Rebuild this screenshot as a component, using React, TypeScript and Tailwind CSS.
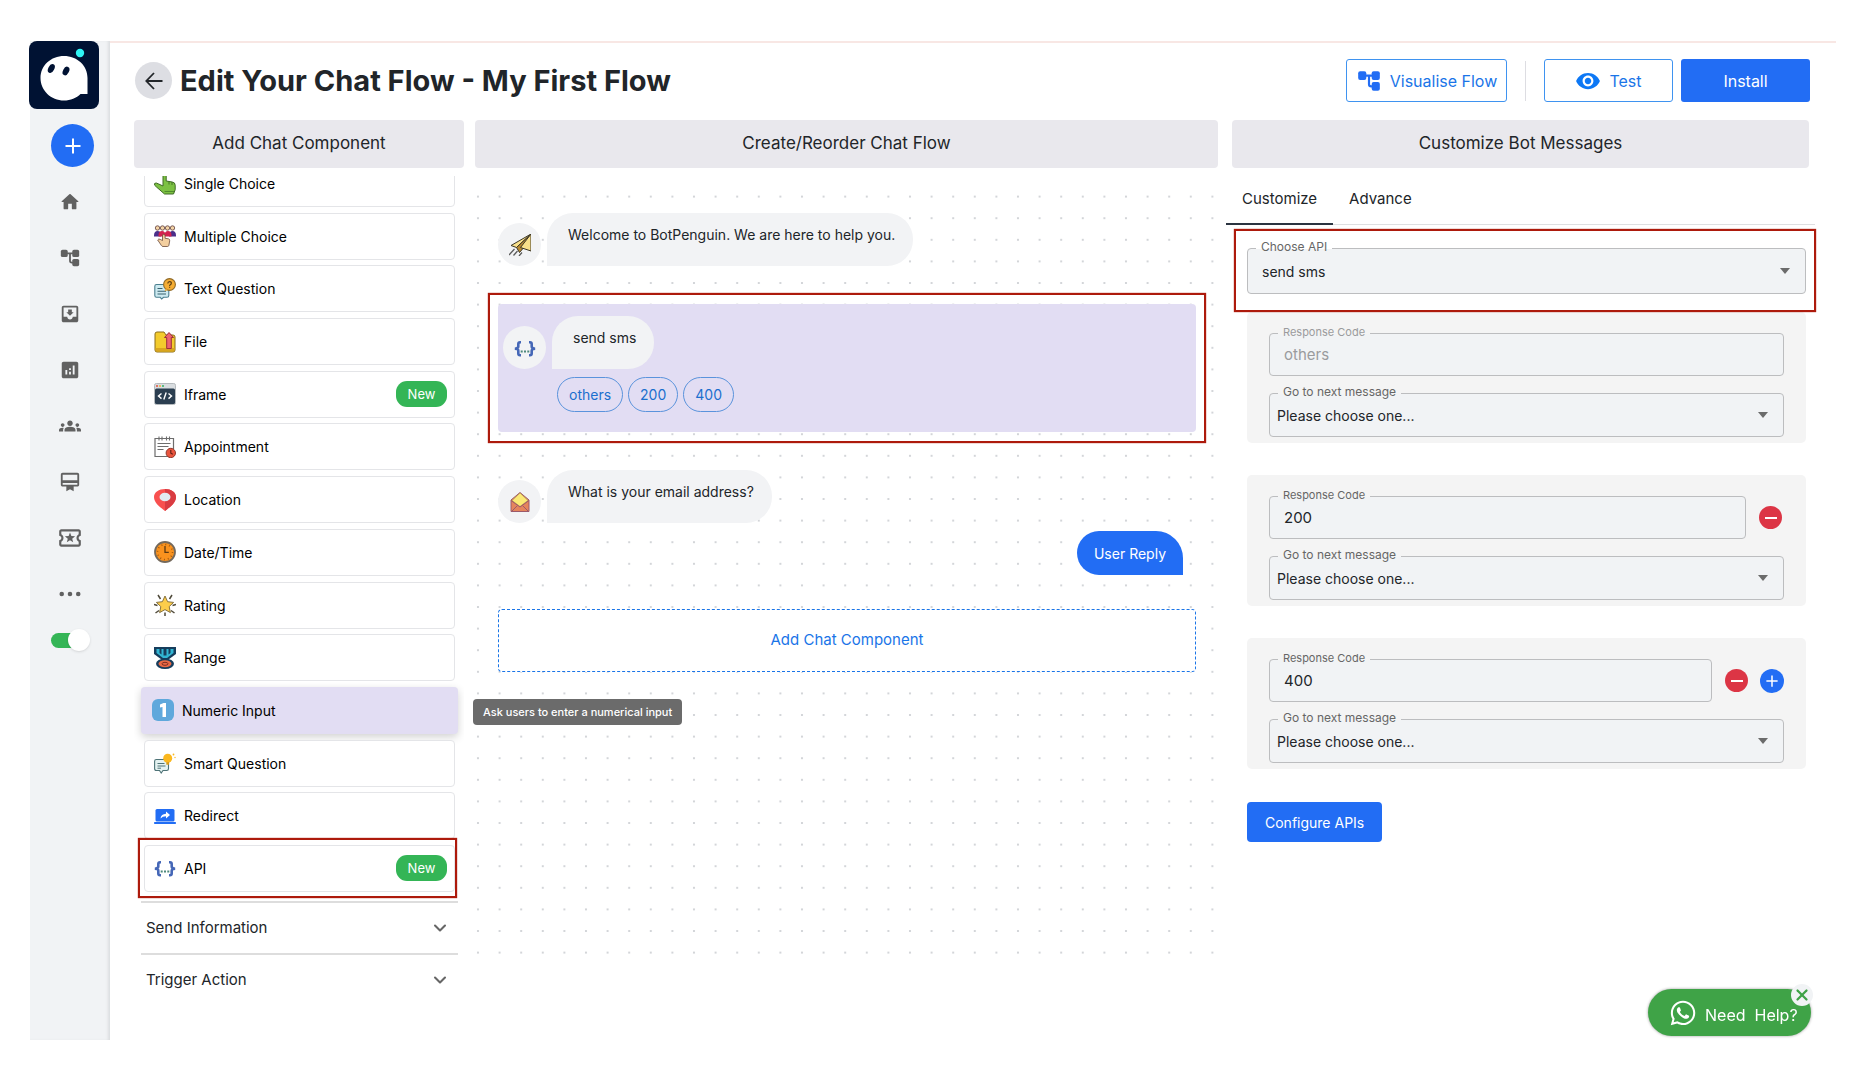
import { useState } from "react";
import type { ReactNode } from "react";
import clsx from "clsx";
import {
  MdAnalytics,
  MdCardMembership,
  MdGroups,
  MdMoveToInbox,
  MdOutlineLocalActivity,
  MdVisibility,
} from "react-icons/md";
import { FaWhatsapp } from "react-icons/fa";
import { ChevronDown, X } from "lucide-react";

type IconProps = { className?: string };

function HomeIcon({ className }: IconProps) {
  return (
    <svg viewBox="0 0 24 24" className={className} fill="currentColor" aria-hidden>
      <path d="M10 19v-5h4v5c0 .55.45 1 1 1h3c.55 0 1-.45 1-1v-7h1.7c.46 0 .68-.57.33-.87L12.67 3.6c-.38-.34-.96-.34-1.34 0l-8.36 7.53c-.34.3-.13.87.33.87H5v7c0 .55.45 1 1 1h3c.55 0 1-.45 1-1z" />
    </svg>
  );
}

function TreeIcon({ className }: IconProps) {
  return (
    <svg viewBox="0 0 24 24" className={className} aria-hidden>
      <g fill="currentColor">
        <rect x="2" y="3" width="7.5" height="8" rx="1.8" />
        <rect x="14.5" y="3" width="7.5" height="8" rx="1.8" />
        <rect x="14.5" y="13" width="7.5" height="8" rx="1.8" />
      </g>
      <path d="M8 7h8M12 7v8q0 2 2 2h2" fill="none" stroke="currentColor" strokeWidth="2" />
    </svg>
  );
}

function DotsIcon({ className }: IconProps) {
  return (
    <svg viewBox="0 0 24 24" className={className} fill="currentColor" aria-hidden>
      <circle cx="3" cy="12" r="2.5" />
      <circle cx="12" cy="12" r="2.5" />
      <circle cx="21" cy="12" r="2.5" />
    </svg>
  );
}

function PlusIcon({ className }: IconProps) {
  return (
    <svg viewBox="0 0 16 16" className={className} aria-hidden>
      <path d="M8 0.5v15M0.5 8h15" stroke="currentColor" strokeWidth="2" />
    </svg>
  );
}

function Logo() {
  return (
    <svg viewBox="0 0 70 68" className="-ml-px h-[68px] w-[70px]" aria-label="BotPenguin" role="img">
      <rect width="70" height="68" rx="8" fill="#001233" />
      <path
        d="M35 15c13 0 23.500 9.500 23.500 22v16H51.500c-4 4-10 6.500-16.500 6.500C22 59.500 11.500 49.500 11.500 37S22 15 35 15z"
        fill="#fff"
      />
      <circle cx="51" cy="12" r="4.200" fill="#2ff5f5" />
      <ellipse cx="22.300" cy="27.500" rx="3" ry="4.800" transform="rotate(27 22.300 27.500)" fill="#001233" />
      <ellipse cx="37" cy="30" rx="3" ry="4.600" transform="rotate(27 37 30)" fill="#001233" />
    </svg>
  );
}

function Glyph({ children }: { children: ReactNode }) {
  return (
    <svg viewBox="0 0 22 22" className="h-[22px] w-[22px] shrink-0" aria-hidden>
      {children}
    </svg>
  );
}

const glyphs: Record<string, ReactNode> = {
  single: (
    <Glyph>
      <path d="M4 1.500h13" stroke="#8a5a22" strokeWidth="2.500" />
      <path
        d="M9 2q1.700-1.600 3.200 0v6l6 1q3 .4 3 3.200v4.500L19.500 21h-9L2.500 14q-3-2-1.800-3.600 1.300-1 3.500.4L9 13z"
        fill="#7cc142"
        stroke="#3f6b26"
        strokeWidth="1"
      />
      <path d="M15 8.500v3M18 9v3" stroke="#3f6b26" strokeWidth=".9" />
      <path d="M10.500 18.500h9.500" stroke="#4f8a2d" strokeWidth="1" />
    </Glyph>
  ),
  multiple: (
    <Glyph>
      <path d="M0 10.500q0-4.500 3.500-4.500T7 9v2.500H0z" fill="#4a2f8a" />
      <path d="M15 10.500q0-4.500 3.500-4.500T22 10.500v1h-7z" fill="#4a2f8a" />
      <path d="M4.500 10.500Q4.500 6 8 6T11.500 10.500v1h-7zM10.500 10.500Q10.500 6 14 6t3.500 4.500v1h-7z" fill="#d3224f" />
      <g fill="#f3d3a4" stroke="#5f3f3f" strokeWidth=".8">
        <circle cx="3.500" cy="3" r="2.200" />
        <circle cx="8.500" cy="3" r="2.200" />
        <circle cx="13.500" cy="3" r="2.200" />
        <circle cx="18.500" cy="3" r="2.200" />
      </g>
      <path
        d="M8.500 11q0-1.800 1.300-1.800T11.100 11v2.300l3.300.5q1.500.3 1.300 2l-.8 4.500q-.3 1.200-1.500 1.200H9q-1 0-1.600-1L3.700 15q.9-1.700 2.500-.6l2.300 1.100z"
        fill="#f3cf9f"
        stroke="#6b4a3a"
        strokeWidth=".8"
      />
    </Glyph>
  ),
  text: (
    <Glyph>
      <path
        d="M2.500 6.500h10.500q1.800 0 1.800 1.800v9.200q0 1.800-1.800 1.800H9.500L7.700 21l-1.500-1.700H2.500Q.8 19.300.8 17.500V8.300q0-1.800 1.700-1.800z"
        fill="#cdeaf0"
        stroke="#4b7f8f"
        strokeWidth="1.100"
      />
      <path d="M3.500 10.500h5M3.500 13.300h8.500M3.500 16h8.500" stroke="#37606e" strokeWidth="1.100" />
      <circle cx="15.500" cy="6.500" r="5.900" fill="#f5ad33" stroke="#8f6a2a" strokeWidth="1.100" />
      <path d="M11.500 10.500l-.8 2.800 3-1.300z" fill="#f5ad33" />
      <path
        d="M13.800 5.500q0-1.900 1.800-1.900t1.700 1.600q0 1-1 1.500-.7.400-.7 1.200M15.600 8.800v1"
        fill="none"
        stroke="#5a3d13"
        strokeWidth="1.200"
      />
    </Glyph>
  ),
  file: (
    <Glyph>
      <path
        d="M1 3q0-2 2-2h7l2 3h7q2 0 2 2v13q0 2-2 2H3q-2 0-2-2z"
        fill="#f3cb2d"
        stroke="#8b6d1c"
        strokeWidth="1"
      />
      <path d="M1.500 17v2q0 1.500 1.500 1.500h16q1.500 0 1.500-1.500v-2z" fill="#d9a51f" />
      <path d="M15 1.500l4.500 5h-2.200v11h-4.600v-11h-2.200z" fill="#ec6371" stroke="#9b2f3b" strokeWidth="1" />
    </Glyph>
  ),
  iframe: (
    <Glyph>
      <rect x=".5" y=".5" width="21" height="21" rx="1.800" fill="#d9dde0" stroke="#b5babd" />
      <rect x="1" y="5.500" width="20" height="15.500" rx="1.500" fill="#2b3e50" />
      <circle cx="3" cy="3" r="1" fill="#e0523f" />
      <circle cx="6" cy="3" r="1" fill="#efb23c" />
      <circle cx="9" cy="3" r="1" fill="#35b265" />
      <path
        d="M7.500 10.500L4.500 13l3 2.600M14.500 10.500l3 2.500-3 2.600M12.200 9.500L9.800 16.500"
        fill="none"
        stroke="#fff"
        strokeWidth="1.400"
      />
    </Glyph>
  ),
  appointment: (
    <Glyph>
      <path d="M14 20.500H1V2.500h18.500V13" fill="#fff" stroke="#6d6d6d" strokeWidth="1.200" />
      <path d="M5 .5v4M8 .5v4M12.500 .5v4M15.500 .5v4" stroke="#6d6d6d" strokeWidth="1.100" />
      <path d="M3.500 7.500h13M3.500 10.500h11M3.500 13.500h6" stroke="#6d6d6d" strokeWidth="1.200" />
      <circle cx="16.800" cy="17" r="4.700" fill="#e9543d" stroke="#91382c" strokeWidth="1" />
      <path d="M16.800 14v3.200l2 1" fill="none" stroke="#5c1f17" strokeWidth="1.100" />
    </Glyph>
  ),
  location: (
    <Glyph>
      <path d="M11 0C5 0 0 3.200 0 8c0 6 6 10 11 14 5-4 11-8 11-14 0-4.800-5-8-11-8z" fill="#f8504f" />
      <path d="M11 0c6 0 11 3.200 11 8 0 6-6 10-11 14z" fill="#d93c42" />
      <ellipse cx="11" cy="8" rx="5.500" ry="4.300" fill="#e2eaf0" />
    </Glyph>
  ),
  date: (
    <Glyph>
      <circle cx="11" cy="11" r="10" fill="#f9921e" stroke="#74695c" strokeWidth="1.800" />
      <circle cx="11" cy="11" r="7.500" fill="none" stroke="#a3590e" strokeWidth="1.600" strokeDasharray="1 2.930" />
      <path d="M11 5v6.300h3.800" fill="none" stroke="#5c3a12" strokeWidth="1.300" />
    </Glyph>
  ),
  rating: (
    <Glyph>
      <path
        d="M4 1l2.500 4M18 1l-2.500 4M0 10.500l3.500 1M22 10.500l-3.500 1M1.500 19L5 16.500M20.500 19L17 16.500M11 18.500V22"
        stroke="#4f4a3a"
        strokeWidth="1.500"
      />
      <path
        d="M11 2l2.600 5.700 6 .7-4.400 4.200 1.200 6-5.400-3-5.400 3 1.200-6L2.400 8.400l6-.7z"
        fill="#fccd4b"
        stroke="#7a6532"
        strokeWidth=".9"
      />
    </Glyph>
  ),
  range: (
    <Glyph>
      <path d="M0 0h22v7l-7.500 5.500h-7L0 7z" fill="#163d5c" />
      <path d="M2.500 2h3v4l2 1.500V2h2v6.500h3V2h2v5.500l2-1.500V2h3v4L13 11H9L2.500 6z" fill="#32b6d3" />
      <ellipse cx="11" cy="16.800" rx="9" ry="5.200" fill="#163d5c" />
      <ellipse cx="11" cy="16.800" rx="6.500" ry="3.500" fill="#ec6a45" />
      <ellipse cx="11" cy="16.800" rx="3" ry="1.500" fill="none" stroke="#7d2f25" strokeWidth="1" />
    </Glyph>
  ),
  numeric: (
    <Glyph>
      <rect width="22" height="22" rx="6" fill="#5fa8dc" />
      <path d="M8 5.500L11.500 4H14v14h-3.500V8L8 8.500z" fill="#fff" />
    </Glyph>
  ),
  smart: (
    <Glyph>
      <path
        d="M2.300 7.500h10.500q1.700 0 1.700 1.700v7.600q0 1.700-1.700 1.700H9L7.200 21l-1.700-2.500H2.300Q.6 18.500.6 16.800V9.200q0-1.700 1.700-1.700z"
        fill="#e4f2f0"
        stroke="#4e7377"
        strokeWidth="1.100"
      />
      <path d="M3.500 11.500h7M3.500 14h8M3.500 16.200h3.500" stroke="#4e7377" strokeWidth="1" />
      <circle cx="13.700" cy="6.200" r="4.500" fill="#fbb81e" />
      <rect x="12.300" y="10.200" width="2.800" height="2.500" fill="#d99a16" />
      <circle cx="19.500" cy="2.500" r=".9" fill="#fbb81e" />
      <circle cx="21" cy="5.500" r=".7" fill="#fbb81e" />
    </Glyph>
  ),
  redirect: (
    <Glyph>
      <rect x="1.500" y="4" width="19" height="12.500" rx="1.500" fill="#226df4" />
      <rect x="0" y="17" width="22" height="2" rx=".8" fill="#226df4" />
      <path d="M6.500 13.500q.5-4.500 5.500-4.800V6.500l4 3.600-4 3.500v-2.300q-3.500 0-5.500 2.200z" fill="#fff" />
    </Glyph>
  ),
  api: (
    <Glyph>
      <g fill="none" stroke="#4567b7" strokeWidth="2.600">
        <path d="M7 5.300H6Q4.300 5.300 4.300 7V9.600Q4.300 11.700 .8 11.700Q4.300 11.700 4.300 13.800V16.500Q4.300 18.200 6 18.200H7" />
        <path d="M15 5.300h1Q17.700 5.300 17.700 7V9.600Q17.700 11.700 21.200 11.700Q17.700 11.700 17.700 13.800V16.500Q17.700 18.200 16 18.200H15" />
      </g>
      <path d="M6.700 14.500h2M10 14.500h2M13.300 14.500h2" stroke="#4e8a7c" strokeWidth="1.900" />
    </Glyph>
  ),
  plane: (
    <Glyph>
      <path d="M22 0L2 11.500l5.500 2z" fill="#f9e08a" stroke="#3c3626" strokeWidth="1" />
      <path d="M22 0L7.500 13.500l3 5 3-3.500z" fill="#b98a33" stroke="#3c3626" strokeWidth="1" />
      <path d="M22 0L11.500 13.500 22 17z" fill="#f9e08a" stroke="#3c3626" strokeWidth="1" />
      <path d="M5.500 15L0 21M8.500 17L4.500 21.500M13 18.500L10 22" stroke="#5b5b5b" strokeWidth="1.300" />
    </Glyph>
  ),
  mail: (
    <Glyph>
      <path d="M2 9l9-7.500L20 9v11.500H2z" fill="#e5845c" stroke="#9b5a6b" strokeWidth="1" />
      <path d="M11 2l8 7.500-8 6-8-6z" fill="#fbe975" stroke="#b99a55" strokeWidth=".8" />
      <path d="M2 9.500l9 6.500 9-6.500M2.500 20.500l6-6M19.500 20.500l-6-6" fill="none" stroke="#9b5a6b" strokeWidth="1" />
    </Glyph>
  ),
};

const components = [
  { icon: "single", label: "Single Choice" },
  { icon: "multiple", label: "Multiple Choice" },
  { icon: "text", label: "Text Question" },
  { icon: "file", label: "File" },
  { icon: "iframe", label: "Iframe", isNew: true },
  { icon: "appointment", label: "Appointment" },
  { icon: "location", label: "Location" },
  { icon: "date", label: "Date/Time" },
  { icon: "rating", label: "Rating" },
  { icon: "range", label: "Range" },
  { icon: "numeric", label: "Numeric Input", active: true },
  { icon: "smart", label: "Smart Question" },
  { icon: "redirect", label: "Redirect" },
  { icon: "api", label: "API", isNew: true, framed: true },
];

const navItems = [
  { label: "Home", icon: <HomeIcon className="h-[22px] w-[22px]" /> },
  { label: "Flows", icon: <TreeIcon className="h-[22px] w-[22px]" /> },
  { label: "Inbox", icon: <MdMoveToInbox size={22} /> },
  { label: "Analytics", icon: <MdAnalytics size={22} /> },
  { label: "Contacts", icon: <MdGroups size={22} /> },
  { label: "Plans", icon: <MdCardMembership size={22} /> },
  { label: "Offers", icon: <MdOutlineLocalActivity size={26} /> },
  { label: "More", icon: <DotsIcon className="h-[22px] w-[22px]" /> },
];

function Sidebar() {
  const [live, setLive] = useState(true);

  return (
    <aside className="flex w-[80px] shrink-0 flex-col bg-[#f1f3f5] shadow-[inset_-3px_0_3px_-1px_#dcdee0]">
      <Logo />
      <button
        type="button"
        aria-label="Create"
        className="mt-[15px] ml-[21px] flex h-[43px] w-[43px] items-center justify-center rounded-full bg-[#226df4] text-white"
      >
        <PlusIcon className="h-4 w-4" />
      </button>
      <nav className="mt-[7px] flex flex-col text-[#616161]">
        {navItems.map((item) => (
          <a key={item.label} href="#" aria-label={item.label} className="flex h-14 items-center justify-center">
            {item.icon}
          </a>
        ))}
      </nav>
      <label className="relative mt-[7px] ml-[21px] flex h-[22px] w-[39px] items-center">
        <input
          type="checkbox"
          aria-label="Bot live"
          checked={live}
          onChange={(e) => setLive(e.target.checked)}
          className="peer sr-only"
        />
        <span className="h-[15px] w-[36px] rounded-full bg-gray-400 peer-checked:bg-[#34b556]" />
        <span className="absolute left-0 h-[22px] w-[22px] rounded-full bg-white shadow peer-checked:left-[17px]" />
      </label>
    </aside>
  );
}

function Highlight({ className }: { className: string }) {
  return (
    <div
      className={clsx("pointer-events-none absolute border-2 border-[#ad1a0c] shadow-[0_0_1px_#ad1a0c]", className)}
    />
  );
}

function ColumnTitle({ children }: { children: ReactNode }) {
  return (
    <h2 className="flex h-12 items-center justify-center rounded-[4px] bg-[#e9e8ed] text-[17px] text-[#212529]">
      {children}
    </h2>
  );
}

function ComponentList() {
  return (
    <section className="w-[330px] shrink-0">
      <ColumnTitle>Add Chat Component</ColumnTitle>
      <div className="mt-2 h-[725px] overflow-hidden">
        <ul className="-mt-4 mr-[9px] ml-[10px] flex h-[732px] flex-col justify-between">
          {components.map((c) => (
            <li key={c.label} className="relative">
              <button
                type="button"
                className={clsx(
                  "flex h-[47px] items-center rounded-[4px] pr-[7px] text-[14px] text-black",
                  c.active
                    ? "-mx-[3px] w-[317px] bg-[#e2ddf3] pl-[11px] shadow-[0_3px_8px_rgba(0,0,0,0.18)]"
                    : "w-full border border-[#e4e5e8] bg-white pl-[9px]"
                )}
              >
                {glyphs[c.icon]}
                <span className="ml-2">{c.label}</span>
                {c.isNew ? (
                  <span className="ml-auto flex h-[26px] w-[51px] items-center justify-center rounded-[11px] bg-[#34b556] text-[13px] text-white">
                    New
                  </span>
                ) : null}
              </button>
              {c.framed ? <Highlight className="-top-[7px] -right-[2px] -bottom-[6px] -left-[6px]" /> : null}
            </li>
          ))}
        </ul>
      </div>
      <div className="mr-[6px] ml-[7px]">
        {["Send Information", "Trigger Action"].map((label) => (
          <button
            key={label}
            type="button"
            className="flex h-[52px] w-full items-center justify-between border-t-2 border-[#dddddd] pr-[8px] pl-[5px] text-[15px] text-[#212529]"
          >
            {label}
            <ChevronDown size={20} strokeWidth={2.5} className="text-[#666]" aria-hidden />
          </button>
        ))}
      </div>
    </section>
  );
}

function BotMessage({ icon, text }: { icon: string; text: string }) {
  return (
    <div className="flex items-end gap-[6px]">
      <div className="flex h-[43px] w-[43px] shrink-0 items-center justify-center rounded-full bg-[#f2f3f5]">
        {glyphs[icon]}
      </div>
      <div className="h-[53px] rounded-[26px] rounded-bl-none bg-[#f2f3f5] pt-[11px] pr-[18px] pl-[21px] text-[14px] leading-[22px] text-[#212529]">
        {text}
      </div>
    </div>
  );
}

function FlowCanvas() {
  return (
    <section className="ml-[11px] min-w-0 flex-[743]">
      <ColumnTitle>Create/Reorder Chat Flow</ColumnTitle>
      <div className="relative mt-2 min-h-[783px] pt-[37px] pr-[22px] pl-[23px]">
        <svg className="absolute inset-0 h-full w-full" aria-hidden>
          <pattern id="grid-dots" x="-7.800" y="9.800" width="21.600" height="21.600" patternUnits="userSpaceOnUse">
            <circle cx="10.800" cy="10.800" r="1.100" fill="#c9ccd0" />
          </pattern>
          <rect y="10" width="100%" height="100%" fill="url(#grid-dots)" />
        </svg>
        <div className="relative">
          <BotMessage icon="plane" text="Welcome to BotPenguin. We are here to help you." />

          <div className="relative mt-[38px] rounded-[4px] bg-[#e2ddf3] px-[5px] pt-3 pb-5">
            <BotMessage icon="api" text="send sms" />
            <div className="mt-2 ml-[54px] flex gap-[5px]">
              {["others", "200", "400"].map((code) => (
                <button
                  key={code}
                  type="button"
                  className="h-[35px] rounded-full border border-[#5a93dc] px-[11px] text-[14px] text-[#1b6fce]"
                >
                  {code}
                </button>
              ))}
            </div>
            <Highlight className="-inset-x-[10px] -inset-y-[11px]" />
          </div>

          <div className="mt-[38px]">
            <BotMessage icon="mail" text="What is your email address?" />
          </div>
          <div className="mt-2 mr-[13px] flex justify-end">
            <div className="flex h-11 items-center rounded-[22px] rounded-tr-[27px] rounded-br-none bg-[#226df4] px-[17px] text-[14px] text-white">
              User Reply
            </div>
          </div>
          <button
            type="button"
            className="mt-[34px] flex h-[63px] w-full items-center justify-center rounded-[4px] border border-dashed border-[#1a75e8] bg-white text-[15px] text-[#1a75e8]"
          >
            Add Chat Component
          </button>
        </div>
        <div
          role="tooltip"
          className="absolute top-[523px] -left-[2px] rounded-[4px] bg-[#6b6b6b] px-[10px] text-[11px] leading-[26px] font-medium text-white"
        >
          Ask users to enter a numerical input
        </div>
      </div>
    </section>
  );
}

// Outlined control caption that cuts through the top border
function NotchLabel({ id, surface, className, children }: { id: string; surface: string; className: string; children: string }) {
  return (
    <label htmlFor={id} className={clsx("absolute -top-[9px] left-[9px] px-[5px] leading-4", surface, className)}>
      {children}
    </label>
  );
}

const whiteNotch = "bg-[linear-gradient(#fff_10px,#f1f3f5_10px)]";
const panelNotch = "bg-[linear-gradient(#f4f4f4_10px,#f1f3f5_10px)]";

function SelectField({
  id,
  label,
  value,
  notch,
  className,
}: {
  id: string;
  label: string;
  value: string;
  notch: string;
  className: string;
}) {
  return (
    <div className="relative">
      <select
        id={id}
        className={clsx(
          "block w-full appearance-none rounded-[4px] border border-[#bcbdbf] bg-[#f1f3f5] text-[14px] text-[#212529]",
          className
        )}
      >
        <option>{value}</option>
      </select>
      <NotchLabel id={id} surface={notch} className="text-[12px] text-[#666]">
        {label}
      </NotchLabel>
      <svg
        viewBox="0 0 10 6"
        className="pointer-events-none absolute top-1/2 right-4 h-[6px] w-[10px] -translate-y-1/2"
        aria-hidden
      >
        <path d="M0 0h10L5 6z" fill="#6b6b6b" />
      </svg>
    </div>
  );
}

type ResponseRow = { code: string; locked?: boolean; canAdd?: boolean };

const responses: ResponseRow[] = [{ code: "others", locked: true }, { code: "200" }, { code: "400", canAdd: true }];

function ResponsePanel({ code, locked, canAdd }: ResponseRow) {
  return (
    <div className="flex flex-col gap-[17px] rounded-[5px] bg-[#f4f4f4] px-[22px] pt-[21px] pb-[6px]">
      <div className="flex items-center">
        <div className="relative flex-1">
          <input
            id={`code-${code}`}
            defaultValue={code}
            disabled={locked}
            className="block h-[43px] w-full rounded-[4px] border border-[#bcbdbf] bg-[#f1f3f5] px-[14px] text-[15px] text-[#212529] disabled:text-[#9a9b9d]"
          />
          <NotchLabel
            id={`code-${code}`}
            surface={panelNotch}
            className={clsx("text-[11px]", locked ? "text-[#9a9b9d]" : "text-[#666]")}
          >
            Response Code
          </NotchLabel>
        </div>
        {!locked ? (
          <button
            type="button"
            aria-label="Remove response"
            className="mr-[2px] ml-[13px] flex h-[23px] w-[23px] items-center justify-center rounded-full bg-[#dc3545]"
          >
            <span className="h-[2px] w-3 bg-white" />
          </button>
        ) : null}
        {canAdd ? (
          <button
            type="button"
            aria-label="Add response"
            className="ml-[10px] flex h-6 w-6 items-center justify-center rounded-full bg-[#226df4] text-white"
          >
            <PlusIcon className="h-3 w-3" />
          </button>
        ) : null}
      </div>
      <SelectField
        id={`next-${code}`}
        label="Go to next message"
        value="Please choose one..."
        notch={panelNotch}
        className="h-11 pl-[7px]"
      />
    </div>
  );
}

function CustomizePanel() {
  const [tab, setTab] = useState("Customize");

  return (
    <section className="ml-[14px] min-w-0 flex-[577]">
      <ColumnTitle>Customize Bot Messages</ColumnTitle>
      <div role="tablist" className="-mx-[6px] mt-[7px] flex shadow-[inset_0_-1px_#dedfe1]">
        {["Customize", "Advance"].map((name) => (
          <button
            key={name}
            type="button"
            role="tab"
            aria-selected={tab === name}
            onClick={() => setTab(name)}
            className={clsx(
              "h-[50px] border-b-2 px-4 text-[15px] text-[#212529]",
              tab === name ? "border-[#2b3440]" : "border-transparent"
            )}
          >
            {name}
          </button>
        ))}
      </div>
      <div className="mt-[23px] mr-[3px] ml-[15px]">
        <div className="relative">
          <SelectField id="choose-api" label="Choose API" value="send sms" notch={whiteNotch} className="h-[46px] pl-[14px]" />
          <Highlight className="-top-[19px] -right-[10px] -bottom-[18px] -left-[13px]" />
        </div>
        <div className="mt-[18px] flex flex-col gap-8">
          {responses.map((row) => (
            <ResponsePanel key={row.code} {...row} />
          ))}
        </div>
        <button type="button" className="mt-[33px] h-10 rounded-[4px] bg-[#226df4] px-[18px] text-[14px] text-white">
          Configure APIs
        </button>
      </div>
    </section>
  );
}

function Header() {
  return (
    <header className="-mr-px ml-px flex h-[43px] items-center">
      <a href="#" aria-label="Back" className="flex h-[37px] w-[37px] items-center justify-center rounded-full bg-[#dddee3]">
        <svg viewBox="0 0 18 18" className="h-[18px] w-[18px]" fill="none" stroke="#212529" strokeWidth="1.800" aria-hidden>
          <path d="M17.500 9H1.500M9 1L1.300 9 9 17" />
        </svg>
      </a>
      <h1 className="ml-[8px] text-[29px] font-bold text-[#212529]">Edit Your Chat Flow - My First Flow</h1>
      <div className="ml-auto flex items-center text-[16px]">
        <button
          type="button"
          className="flex h-[43px] w-[161px] items-center justify-center gap-2 rounded-[3px] border border-[#3f93f0] text-[#1a75e8]"
        >
          <TreeIcon className="h-[26px] w-[26px] text-[#226df4]" />
          Visualise Flow
        </button>
        <span className="mx-[18px] h-10 w-px bg-[#dddde2]" />
        <button
          type="button"
          className="flex h-[43px] w-[129px] items-center justify-center gap-2 rounded-[3px] border border-[#3f93f0] text-[#1a75e8]"
        >
          <MdVisibility size={26} className="text-[#0d78f5]" />
          Test
        </button>
        <button type="button" className="ml-2 h-[43px] w-[129px] rounded-[3px] bg-[#226df4] text-white">
          Install
        </button>
      </div>
    </header>
  );
}

function HelpButton() {
  return (
    <div className="fixed right-[55px] bottom-[44px]">
      <button
        type="button"
        className="flex h-[47px] w-[163px] items-center rounded-full bg-[#3fa347] pl-[21px] text-[16px] text-white shadow-[0_0_3px_rgba(0,0,0,0.4)]"
      >
        <FaWhatsapp size={28} />
        <span className="ml-2 flex gap-[9px] pt-1">
          <span>Need</span>
          <span>Help?</span>
        </span>
      </button>
      <button
        type="button"
        aria-label="Close help"
        className="absolute -top-[5px] -right-[2px] flex h-[22px] w-[22px] items-center justify-center rounded-full bg-[#f1f3f5] text-[#3fa347]"
      >
        <X size={18} strokeWidth={3} aria-hidden />
      </button>
    </div>
  );
}

export default function App() {
  return (
    <div className="flex min-h-screen bg-white px-[30px] pt-[41px] pb-10 font-['Inter',sans-serif]">
      <Sidebar />
      <main className="min-w-0 flex-1 border-t-2 border-[#f8e7e4] pt-4 pr-[27px] pl-6">
        <Header />
        <div className="mt-[18px] flex">
          <ComponentList />
          <FlowCanvas />
          <CustomizePanel />
        </div>
      </main>
      <HelpButton />
    </div>
  );
}
